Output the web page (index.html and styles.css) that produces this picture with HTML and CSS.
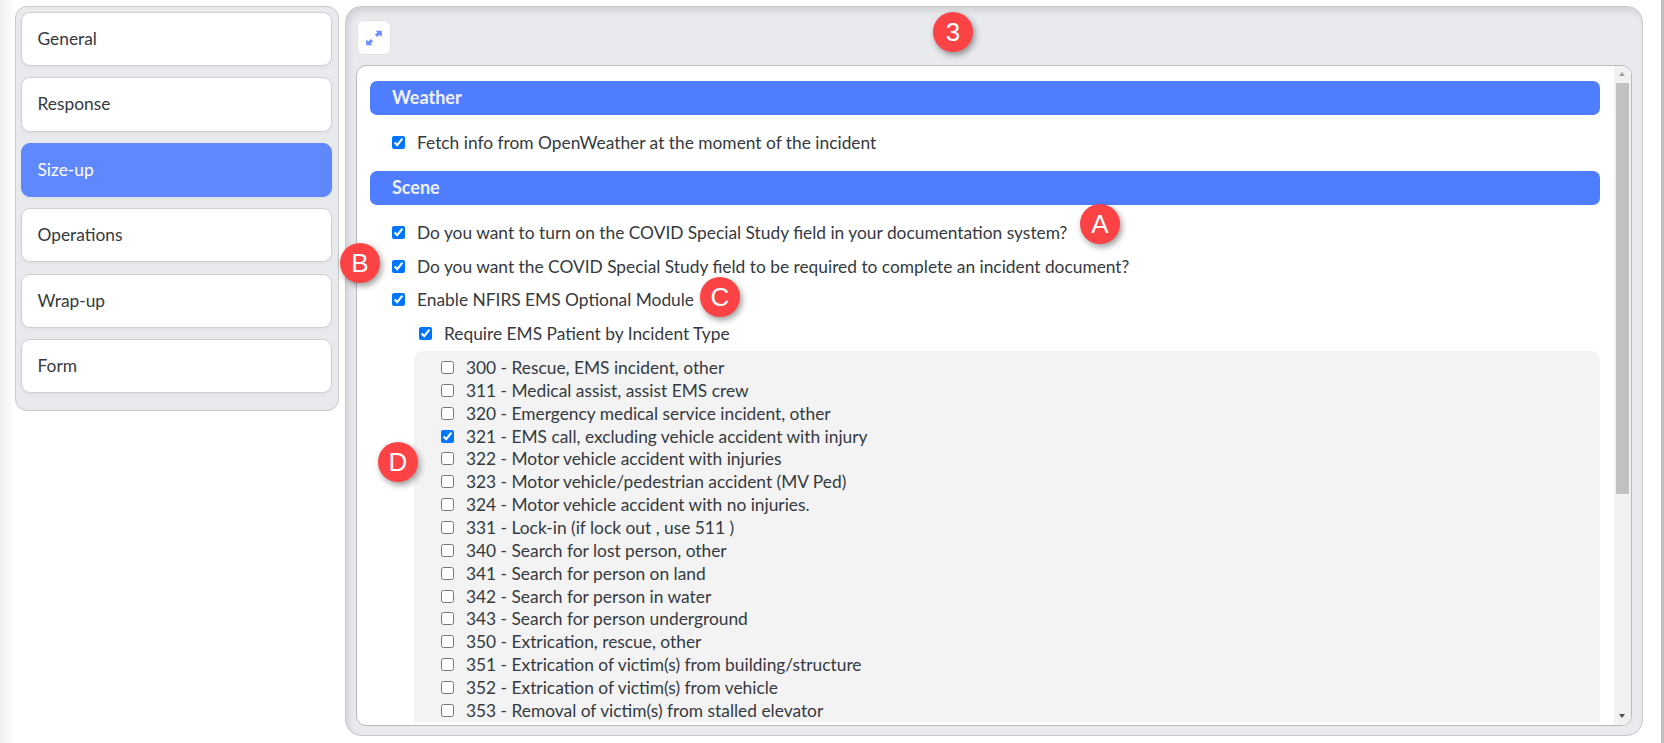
FILE: index.html
```html
<!DOCTYPE html>
<html lang="en">
<head>
    <meta charset="UTF-8">
    <title>Size-up settings</title>
    <link rel="stylesheet" href="styles.css">
</head>
<body>
    <div class="page">
        <nav class="side-panel">
            <a class="side-item">General</a>
            <a class="side-item">Response</a>
            <a class="side-item active">Size-up</a>
            <a class="side-item">Operations</a>
            <a class="side-item">Wrap-up</a>
            <a class="side-item">Form</a>
        </nav>

        <main class="main-panel">
            <div class="toolbar">
                <button class="expand-btn" type="button">
                    <svg width="18" height="18" viewBox="0 0 16 16">
                        <path d="M9.5 1.5H15V7L13 5 10.8 7.2 8.8 5.2 11 3z" fill="#6f8fff"/>
                        <path d="M6.5 14.5H1V9L3 11 5.2 8.8 7.2 10.8 5 13z" fill="#6f8fff"/>
                    </svg>
                </button>
            </div>

            <div class="content-box">
                <div class="content">
                    <h2 class="section-bar">Weather</h2>
                    <label class="check-row"><input type="checkbox" checked> Fetch info from OpenWeather at the moment of the incident</label>

                    <h2 class="section-bar">Scene</h2>
                    <div class="check-group">
                        <label class="check-row"><input type="checkbox" checked> Do you want to turn on the COVID Special Study field in your documentation system?</label>
                        <label class="check-row"><input type="checkbox" checked> Do you want the COVID Special Study field to be required to complete an incident document?</label>
                        <label class="check-row"><input type="checkbox" checked> Enable NFIRS EMS Optional Module</label>
                        <label class="check-row sub"><input type="checkbox" checked> Require EMS Patient by Incident Type</label>
                    </div>

                    <div class="type-list">
                        <label class="type-row"><input type="checkbox"> 300 - Rescue, EMS incident, other</label>
                        <label class="type-row"><input type="checkbox"> 311 - Medical assist, assist EMS crew</label>
                        <label class="type-row"><input type="checkbox"> 320 - Emergency medical service incident, other</label>
                        <label class="type-row"><input type="checkbox" checked> 321 - EMS call, excluding vehicle accident with injury</label>
                        <label class="type-row"><input type="checkbox"> 322 - Motor vehicle accident with injuries</label>
                        <label class="type-row"><input type="checkbox"> 323 - Motor vehicle/pedestrian accident (MV Ped)</label>
                        <label class="type-row"><input type="checkbox"> 324 - Motor vehicle accident with no injuries.</label>
                        <label class="type-row"><input type="checkbox"> 331 - Lock-in (if lock out , use 511 )</label>
                        <label class="type-row"><input type="checkbox"> 340 - Search for lost person, other</label>
                        <label class="type-row"><input type="checkbox"> 341 - Search for person on land</label>
                        <label class="type-row"><input type="checkbox"> 342 - Search for person in water</label>
                        <label class="type-row"><input type="checkbox"> 343 - Search for person underground</label>
                        <label class="type-row"><input type="checkbox"> 350 - Extrication, rescue, other</label>
                        <label class="type-row"><input type="checkbox"> 351 - Extrication of victim(s) from building/structure</label>
                        <label class="type-row"><input type="checkbox"> 352 - Extrication of victim(s) from vehicle</label>
                        <label class="type-row"><input type="checkbox"> 353 - Removal of victim(s) from stalled elevator</label>
                    </div>
                </div>

                <div class="scrollbar">
                    <span class="arrow-up"></span>
                    <div class="scroll-track"><div class="scroll-thumb"></div></div>
                    <span class="arrow-down"></span>
                </div>
            </div>
        </main>
    </div>

    <span class="marker marker-3">3</span>
    <span class="marker marker-a">A</span>
    <span class="marker marker-b">B</span>
    <span class="marker marker-c">C</span>
    <span class="marker marker-d">D</span>
</body>
</html>
```

FILE: styles.css
```css
* {
    box-sizing: border-box;
}
html, body {
    height: 743px;
    overflow: hidden;
}
body {
    margin: 0;
    font-family: Lato, Arial, sans-serif;
    font-size: 17.35px;
    color: #343a40;
    background: #fff;
    position: relative;
}
body::before {
    content: "";
    position: absolute;
    left: 0;
    top: 0;
    bottom: 0;
    width: 15px;
    background: linear-gradient(to right, #efefef, #fff);
}
body::after {
    content: "";
    position: absolute;
    right: 0;
    top: 0;
    bottom: 0;
    width: 3px;
    background: #c0c0c0;
}
.page {
    display: flex;
    align-items: flex-start;
    gap: 6px;
    padding: 6px 21px 0 15px;
    position: relative;
}

/* left menu */
.side-panel {
    width: 324px;
    flex-shrink: 0;
    height: 405px;
    padding: 5px 6px 5px 5px;
    display: flex;
    flex-direction: column;
    gap: 11.2px;
    background: #e9eaee;
    border: 1px solid #c8c9cc;
    border-radius: 12px;
}
.side-item {
    height: 54.2px;
    display: flex;
    align-items: center;
    padding: 0 0 1px 15.5px;
    background: #fff;
    border: 1px solid #cfd0d3;
    border-radius: 9px;
    box-shadow: 0 2px 4px rgba(0, 0, 0, 0.04);
}
.side-item.active {
    background: #6088fd;
    border-color: #6088fd;
    color: #fff;
}

/* main area */
.main-panel {
    flex: 1;
    height: 730px;
    padding: 13px 10px 9px;
    display: flex;
    flex-direction: column;
    background: #e9eaee;
    border: 1px solid #c8c9cc;
    border-radius: 16px;
    box-shadow: inset 3px 4px 6px rgba(0, 0, 0, 0.1);
}
.toolbar {
    height: 45px;
    flex-shrink: 0;
}
.expand-btn {
    width: 34px;
    height: 35px;
    margin-left: 1px;
    padding: 0;
    display: flex;
    align-items: center;
    justify-content: center;
    background: #fff;
    border: 1px solid #e1e2e6;
    border-radius: 7px;
}
.content-box {
    flex: 1;
    min-height: 0;
    display: flex;
    background: #fff;
    border: 1px solid #b9babd;
    border-radius: 10px;
    overflow: hidden;
}
.content {
    flex: 1;
    min-width: 0;
    padding: 15px 14px 0 13px;
    overflow: hidden;
}
.section-bar {
    margin: 0;
    height: 34px;
    padding: 0 0 2px 22px;
    display: flex;
    align-items: center;
    font-size: 18px;
    font-weight: 700;
    color: #f1f1f8;
    background: #4f7dff;
    border-radius: 7px;
}
.check-row {
    display: flex;
    align-items: center;
    height: 33.6px;
    padding-left: 22px;
    margin-top: 11px;
    margin-bottom: 11.2px;
}
.check-group .check-row {
    margin: 0;
}
.check-group {
    margin-top: 11px;
}
.check-row input, .type-row input {
    width: 13px;
    height: 13px;
    margin: 0 12px 0 0;
    flex-shrink: 0;
}
.check-row.sub {
    padding-left: 49px;
}

/* incident types */
.type-list {
    margin: 1px 0 0 44px;
    padding: 5px 0 0 27px;
    background: #f3f3f3;
    border-radius: 9px 9px 0 0;
}
.type-row {
    display: flex;
    align-items: center;
    height: 22.85px;
}
.type-row input {
    margin-right: 12px;
}

/* scrollbar */
.scrollbar {
    width: 17px;
    flex-shrink: 0;
    display: flex;
    flex-direction: column;
    align-items: center;
    background: #f1f1f1;
}
.arrow-up, .arrow-down {
    display: block;
    height: 17px;
    width: 17px;
    position: relative;
    flex-shrink: 0;
}
.arrow-up::after, .arrow-down::after {
    content: "";
    position: absolute;
    left: 5px;
    top: 6px;
    border-left: 3.5px solid transparent;
    border-right: 3.5px solid transparent;
}
.arrow-up::after {
    border-bottom: 4px solid #a3a3a3;
}
.arrow-down::after {
    border-top: 4px solid #505050;
}
.scroll-track {
    flex: 1;
    width: 100%;
    padding: 0 2px;
}
.scroll-thumb {
    height: 411px;
    background: #c1c1c1;
}

/* callout markers */
.marker {
    position: absolute;
    width: 40px;
    height: 40px;
    display: flex;
    align-items: center;
    justify-content: center;
    font-family: "Liberation Sans", Arial, sans-serif;
    font-size: 26px;
    color: #fff;
    background: #fb4346;
    border-radius: 50%;
    box-shadow: 2px 3px 6px rgba(0, 0, 0, 0.4);
}
.marker-3 { left: 933px; top: 12px; }
.marker-a { left: 1080px; top: 204px; }
.marker-b { left: 340px; top: 243px; }
.marker-c { left: 700px; top: 277px; }
.marker-d { left: 378px; top: 442px; }
```
